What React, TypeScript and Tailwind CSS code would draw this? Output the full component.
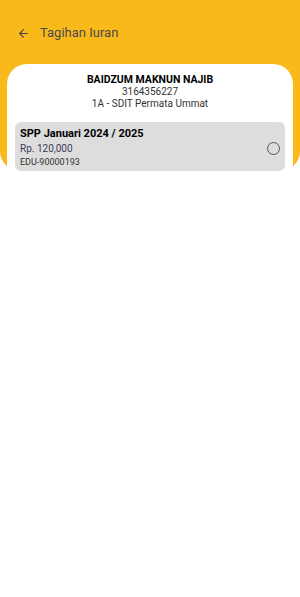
import { ArrowLeft } from "lucide-react";

export default function App() {
  return (
    <div className="min-h-[597px] bg-white font-['Roboto',sans-serif]">
      <div className="bg-[#fab91b] rounded-b-[20px] px-[7px]">
        {/* header */}
        <div className="flex items-center h-[64px] pl-[10px] pt-[2px]">
          <ArrowLeft size={13} strokeWidth={2} className="text-[#444]" />
          <span className="ml-[10px] text-[13px] text-[#4a4a4a]">Tagihan Iuran</span>
        </div>

        {/* card */}
        <div className="bg-white rounded-t-[20px] px-[8px] pt-[10px]">
          <div className="text-center leading-[12px]">
            <p className="text-[10.5px] font-bold text-black">BAIDZUM MAKNUN NAJIB</p>
            <p className="text-[10px] text-[#333]">3164356227</p>
            <p className="text-[10px] text-[#333]">1A - SDIT Permata Ummat</p>
          </div>

          <div className="mt-[12px] bg-[#dddddd] rounded-[6px] pl-[5px] pr-[5px] pt-[5px] pb-[2px] flex items-center">
            <div className="flex-1">
              <p className="text-[11px] font-bold text-black leading-[14px]">SPP Januari 2024 / 2025</p>
              <p className="text-[10px] text-[#3b3b5c] leading-[14px] mt-[1px]">Rp. 120,000</p>
              <p className="text-[9px] text-[#333] leading-[13px]">EDU-90000193</p>
            </div>
            <div className="w-[13px] h-[13px] rounded-full border-[1.5px] border-[#555]" />
          </div>
        </div>
      </div>
    </div>
  );
}
